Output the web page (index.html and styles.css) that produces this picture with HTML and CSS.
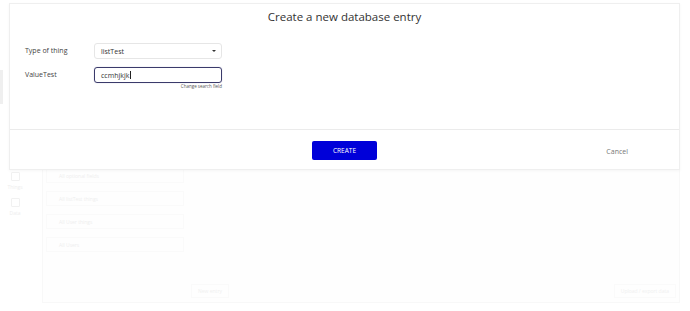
FILE: index.html
```html
<!DOCTYPE html>
<html>
<head>
<meta charset="utf-8">
<link rel="stylesheet" href="styles.css">
</head>
<body>
<div class="app">
  <aside class="side">
    <div class="side-tab"></div>
    <div class="side-item"><span class="side-ico"></span><span class="side-lbl">Things</span></div>
    <div class="side-item"><span class="side-ico"></span><span class="side-lbl">Data</span></div>
  </aside>
  <main class="main">
    <div class="panel">
      <div class="list">
        <div class="list-item">All optional fields</div>
        <div class="list-item">All listTest things</div>
        <div class="list-item">All User things</div>
        <div class="list-item">All Users</div>
      </div>
      <div class="panel-foot">
        <span class="ghost-btn">New entry</span>
        <span class="ghost-btn right">Upload / export data</span>
      </div>
    </div>
  </main>
</div>

<div class="modal">
  <div class="modal-title">Create a new database entry</div>
  <div class="modal-body">
    <div class="row">
      <label class="lbl">Type of thing</label>
      <div class="field select">
        <span>listTest</span>
        <span class="caret"></span>
      </div>
    </div>
    <div class="row">
      <label class="lbl">ValueTest</label>
      <div class="field-wrap">
        <div class="field input"><span>ccmhjkjk</span><span class="cursor"></span></div>
        <div class="hint">Change search field</div>
      </div>
    </div>
  </div>
  <div class="modal-foot">
    <span></span>
    <button class="btn-create">CREATE</button>
    <span class="cancel">Cancel</span>
  </div>
</div>
</body>
</html>
```
FILE: styles.css
```css
* { box-sizing: border-box; }
html, body { margin: 0; padding: 0; }
body {
  width: 690px;
  height: 311px;
  overflow: hidden;
  background: #fff;
  font-family: "Open Sans", "Liberation Sans", sans-serif;
  position: relative;
}

/* faded background app */
.app {
  display: flex;
  height: 311px;
}
.side {
  width: 30px;
  display: flex;
  flex-direction: column;
  align-items: center;
  padding-top: 70px;
  gap: 8px;
}
.side-tab {
  align-self: flex-start;
  width: 3px;
  height: 34px;
  background: #efefef;
  margin-bottom: 60px;
}
.side-item {
  display: flex;
  flex-direction: column;
  align-items: center;
  gap: 3px;
}
.side-ico {
  width: 9px;
  height: 9px;
  border: 1px solid #f1f1f1;
  border-radius: 1px;
}
.side-lbl {
  font-size: 5px;
  color: #eeeeee;
}
.main {
  flex: 1;
  padding: 164px 10px 8px 12px;
}
.panel {
  height: 100%;
  border: 1px solid #f8f8f8;
  background: #fefefe;
  display: flex;
  flex-direction: column;
  padding: 3px 3px 4px;
}
.list {
  display: flex;
  flex-direction: column;
  gap: 8px;
  width: 138px;
}
.list-item {
  height: 15px;
  border: 1px solid #fafafa;
  font-size: 5px;
  color: #eeeeee;
  display: flex;
  align-items: center;
  padding-left: 12px;
}
.panel-foot {
  margin-top: auto;
  display: flex;
  justify-content: space-between;
  align-items: center;
  padding-left: 145px;
}
.ghost-btn {
  font-size: 5px;
  color: #f0f0f0;
  border: 1px solid #fafafa;
  padding: 3px 6px;
}

/* modal */
.modal {
  position: absolute;
  left: 9px;
  top: 3px;
  width: 671px;
  background: #fff;
  border: 1px solid #efefef;
  box-shadow: 0 1px 3px rgba(0,0,0,0.04);
}
.modal-title {
  height: 25px;
  display: flex;
  align-items: center;
  justify-content: center;
  font-size: 11.5px;
  color: #333;
}
.modal-body {
  padding: 14px 15px 0;
  height: 101px;
  display: flex;
  flex-direction: column;
  gap: 8px;
  border-bottom: 1px solid #ebebeb;
}
.row {
  display: flex;
  align-items: flex-start;
}
.lbl {
  width: 69px;
  font-size: 7px;
  color: #444;
  line-height: 16px;
}
.field-wrap {
  display: flex;
  flex-direction: column;
  align-items: flex-end;
}
.field {
  width: 128px;
  height: 16px;
  border-radius: 3px;
  font-size: 7px;
  color: #333;
  display: flex;
  align-items: center;
  padding-left: 6px;
}
.select {
  border: 1px solid #e6e6e6;
  justify-content: space-between;
  padding-right: 5px;
}
.caret {
  width: 0;
  height: 0;
  border-left: 2.5px solid transparent;
  border-right: 2.5px solid transparent;
  border-top: 2.5px solid #333;
}
.input {
  border: 1px solid #3b3b6b;
  box-shadow: 0 0 1px rgba(40,40,110,0.4);
}
.cursor {
  width: 1px;
  height: 8px;
  background: #222;
  margin-left: 0.5px;
}
.hint {
  font-size: 4.5px;
  color: #555;
  margin-top: 1px;
  line-height: 5px;
}
.modal-foot {
  height: 39px;
  display: grid;
  grid-template-columns: 1fr auto 1fr;
  align-items: center;
}
.btn-create {
  width: 65px;
  height: 19px;
  background: #0000d9;
  color: #fff;
  border: none;
  border-radius: 2px;
  font-family: "Open Sans", "Liberation Sans", sans-serif;
  font-size: 6.5px;
  padding: 0;
  margin-top: 1px;
}
.cancel {
  justify-self: end;
  margin-right: 51px;
  font-size: 7px;
  color: #777;
  margin-top: 4px;
}
```
